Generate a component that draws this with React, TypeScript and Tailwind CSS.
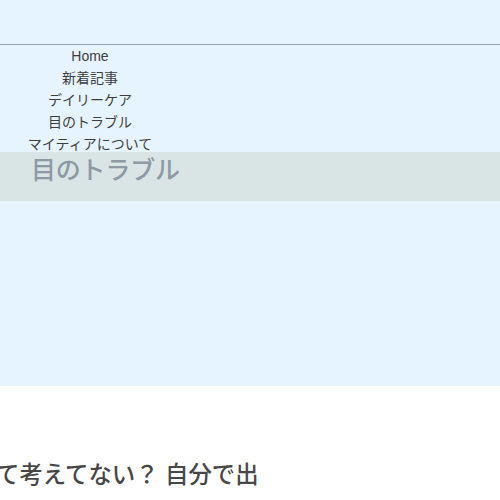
const navItems = ["Home", "新着記事", "デイリーケア", "目のトラブル", "マイティアについて"]

export default function App() {
  const jp = "font-['Liberation_Sans','Noto_Sans_CJK_JP',sans-serif]"

  return (
    <div className={`w-[500px] h-[500px] overflow-hidden bg-white ${jp}`}>
      <div className="bg-[#e6f4ff] h-[386px]">
        <header className="h-[45px] border-b border-[#9aa6b0]" />

        <nav className="w-[180px] h-[107px]">
          <ul className="flex flex-col items-center">
            {navItems.map((item) => (
              <li key={item} className="h-[22px] leading-[22px] text-[14px] text-[#3e3e3e]">
                {item}
              </li>
            ))}
          </ul>
        </nav>

        <div className="relative h-[49px] bg-[#d9e5e5] pl-[31px]">
          <h1 className="text-[25px] leading-[36px] font-medium text-[#8d9aa4] tracking-[-0.2px]">
            目のトラブル
          </h1>
        </div>
      </div>

      <div className="pt-[74px] overflow-hidden">
        <p className="ml-[-4px] whitespace-nowrap text-[23.4px] leading-[30px] font-medium text-[#474747]">
          て考えてない？ 自分で出
        </p>
      </div>
    </div>
  )
}
